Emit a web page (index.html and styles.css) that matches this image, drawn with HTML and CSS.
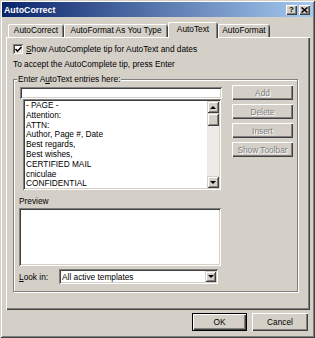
FILE: index.html
```html
<!DOCTYPE html>
<html>
<head>
<meta charset="utf-8">
<title>AutoCorrect</title>
<link rel="stylesheet" href="styles.css">
</head>
<body>
<div class="window">
  <div class="titlebar">
    <span class="title">AutoCorrect</span>
    <div class="caption-btns">
      <span class="capbtn help">?</span>
      <span class="capbtn close"><svg width="7" height="6" viewBox="0 0 7 6"><path d="M0.5 0.5 L6.5 5.5 M6.5 0.5 L0.5 5.5" stroke="#000" stroke-width="1.5"/></svg></span>
    </div>
  </div>
  <div class="tabs">
    <div class="tab tab-w1">AutoCorrect</div>
    <div class="tab tab-w2">AutoFormat As You Type</div>
    <div class="tab tab-sel">AutoText</div>
    <div class="tab tab-w4">AutoFormat</div>
  </div>
  <div class="panel">
    <div class="chkrow">
      <span class="chk"><svg width="7" height="7" viewBox="0 0 7 7"><path d="M0.5 3 L2.5 5.2 L6.5 1" fill="none" stroke="#000" stroke-width="1.6"/></svg></span>
      <span><u>S</u>how AutoComplete tip for AutoText and dates</span>
    </div>
    <div class="hint">To accept the AutoComplete tip, press Enter</div>
    <div class="group">
      <span class="glabel">Enter A<u>u</u>toText entries here:</span>
      <div class="gbody">
        <div class="leftcol">
          <div class="input"></div>
          <div class="list">
            <div class="items">
              <div>- PAGE -</div>
              <div>Attention:</div>
              <div>ATTN:</div>
              <div>Author, Page #, Date</div>
              <div>Best regards,</div>
              <div>Best wishes,</div>
              <div>CERTIFIED MAIL</div>
              <div>cniculae</div>
              <div>CONFIDENTIAL</div>
            </div>
            <div class="vscroll">
              <div class="sbtn"><span class="arrow-up"></span></div>
              <div class="thumb"></div>
              <div class="track"></div>
              <div class="sbtn"><span class="arrow-down"></span></div>
            </div>
          </div>
          <div class="plabel">Preview</div>
          <div class="preview"></div>
          <div class="lookrow">
            <span class="looklabel"><u>L</u>ook in:</span>
            <div class="combo">
              <span class="combotext">All active templates</span>
              <span class="combobtn"><span class="arrow-down"></span></span>
            </div>
          </div>
        </div>
        <div class="rightcol">
          <div class="btn disabled">Add</div>
          <div class="btn disabled">Delete</div>
          <div class="btn disabled">Insert</div>
          <div class="btn disabled">Show Toolbar</div>
        </div>
      </div>
    </div>
  </div>
  <div class="footer">
    <div class="btn default okbtn">OK</div>
    <div class="btn cancelbtn">Cancel</div>
  </div>
</div>
</body>
</html>
```

FILE: styles.css
```css
html, body {
  margin: 0;
  padding: 0;
  background: #d4d0c8;
}
body {
  font-family: "Liberation Sans", Arial, sans-serif;
  font-size: 8.3px;
  color: #000;
}
.window {
  width: 315px;
  height: 338px;
  box-sizing: border-box;
  background: #d4d0c8;
  padding: 2px 2px 0 2px;
  display: flex;
  flex-direction: column;
  box-shadow: inset 1px 1px #d4d0c8, inset -1px -1px #404040, inset 2px 2px #fff, inset -2px -2px #808080;
}
.titlebar {
  height: 15px;
  flex: none;
  display: flex;
  align-items: center;
  justify-content: space-between;
  padding: 0 3px 0 2px;
  background: linear-gradient(to right, #0a246a, #a6caf0);
}
.title {
  color: #fff;
  font-weight: bold;
  font-size: 8.8px;
}
.caption-btns {
  display: flex;
  gap: 2px;
}
.capbtn {
  width: 11px;
  height: 10px;
  box-sizing: border-box;
  background: #d4d0c8;
  display: flex;
  align-items: center;
  justify-content: center;
  font-weight: bold;
  font-size: 8px;
  box-shadow: inset 1px 1px #fff, inset -1px -1px #404040, inset -2px -2px #808080;
}
.tabs {
  flex: none;
  height: 15px;
  margin-top: 5px;
  padding-left: 6px;
  display: flex;
  align-items: flex-end;
}
.tab {
  height: 13px;
  box-sizing: border-box;
  text-align: center;
  line-height: 13px;
  white-space: nowrap;
  border-radius: 2px 2px 0 0;
  box-shadow: inset 1px 0 #fff, inset 0 1px #fff, inset -1px 0 #404040, inset -2px 0 #808080;
}
.tab-w1 { width: 56px; }
.tab-w2 { width: 104px; }
.tab-w4 { width: 52px; }
.tab-sel {
  width: 50px;
  height: 16px;
  line-height: 14px;
  margin-bottom: -1px;
  position: relative;
  z-index: 1;
  background: #d4d0c8;
}
.panel {
  flex: none;
  height: 273px;
  margin: 0 3px 0 4px;
  box-sizing: border-box;
  padding: 7px 0 0 7px;
  box-shadow: inset 1px 1px #fff, inset -1px -1px #404040, inset -2px -2px #808080;
  display: flex;
  flex-direction: column;
}
.chkrow {
  height: 10px;
  display: flex;
  align-items: center;
  gap: 3px;
}
.chk {
  width: 10px;
  height: 10px;
  box-sizing: border-box;
  background: #fff;
  display: flex;
  align-items: center;
  justify-content: center;
  box-shadow: inset 1px 1px #808080, inset -1px -1px #fff, inset 2px 2px #404040, inset -2px -2px #d4d0c8;
}
.hint {
  margin-top: 5px;
  height: 11px;
  line-height: 11px;
}
.group {
  margin-top: 9px;
  width: 285px;
  box-sizing: border-box;
  border: 1px solid #808080;
  box-shadow: inset 1px 1px #fff, 1px 1px #fff;
  padding: 0 4px 7px 6px;
  display: flex;
  flex-direction: column;
}
.glabel {
  align-self: flex-start;
  margin-top: -6px;
  margin-left: -3px;
  padding: 0 1px;
  height: 11px;
  line-height: 11px;
  background: #d4d0c8;
}
.gbody {
  margin-top: 2px;
  display: flex;
}
.leftcol {
  width: 202px;
  display: flex;
  flex-direction: column;
}
.sunken {
  box-shadow: inset 1px 1px #808080, inset -1px -1px #fff, inset 2px 2px #404040, inset -2px -2px #d4d0c8;
}
.input, .list, .preview, .combo {
  background: #fff;
  box-sizing: border-box;
  box-shadow: inset 1px 1px #808080, inset -1px -1px #fff, inset 2px 2px #404040, inset -2px -2px #d4d0c8;
}
.input {
  height: 12px;
}
.list {
  margin-left: 3px;
  width: 198px;
  height: 91px;
  padding: 2px;
  display: flex;
}
.items {
  flex: 1;
  padding-left: 1px;
  line-height: 9.8px;
  white-space: nowrap;
  overflow: hidden;
}
.vscroll {
  width: 12px;
  display: flex;
  flex-direction: column;
}
.sbtn {
  height: 12px;
  flex: none;
  box-sizing: border-box;
  background: #d4d0c8;
  display: flex;
  align-items: center;
  justify-content: center;
  box-shadow: inset 1px 1px #d4d0c8, inset -1px -1px #404040, inset 2px 2px #fff, inset -2px -2px #808080;
}
.thumb {
  height: 13px;
  flex: none;
  background: #d4d0c8;
  box-shadow: inset 1px 1px #d4d0c8, inset -1px -1px #404040, inset 2px 2px #fff, inset -2px -2px #808080;
}
.track {
  flex: 1;
  background: #ecebe7;
}
.arrow-up {
  width: 0;
  height: 0;
  border-left: 3px solid transparent;
  border-right: 3px solid transparent;
  border-bottom: 3px solid #000;
}
.arrow-down {
  width: 0;
  height: 0;
  border-left: 3px solid transparent;
  border-right: 3px solid transparent;
  border-top: 3px solid #000;
}
.plabel {
  margin-top: 6px;
  margin-left: -1px;
  height: 11px;
  line-height: 11px;
}
.preview {
  margin-top: 1px;
  margin-left: -1px;
  width: 202px;
  height: 58px;
}
.lookrow {
  margin-top: 3px;
  margin-left: -1px;
  height: 15px;
  display: flex;
  align-items: center;
}
.looklabel {
  width: 40px;
}
.combo {
  width: 159px;
  height: 15px;
  padding: 2px;
  display: flex;
  align-items: center;
  justify-content: space-between;
}
.combotext {
  padding-left: 1px;
}
.combobtn {
  width: 11px;
  height: 11px;
  box-sizing: border-box;
  background: #d4d0c8;
  display: flex;
  align-items: center;
  justify-content: center;
  box-shadow: inset 1px 1px #d4d0c8, inset -1px -1px #404040, inset 2px 2px #fff, inset -2px -2px #808080;
}
.rightcol {
  margin-left: 10px;
  margin-top: -2px;
  width: 61px;
  display: flex;
  flex-direction: column;
  gap: 4px;
}
.btn {
  height: 15px;
  box-sizing: border-box;
  background: #d4d0c8;
  display: flex;
  align-items: center;
  justify-content: center;
  white-space: nowrap;
  box-shadow: inset 1px 1px #fff, inset -1px -1px #404040, inset -2px -2px #808080;
}
.btn.disabled {
  color: #808080;
  text-shadow: 1px 1px #fff;
}
.footer {
  flex: none;
  margin-top: 3px;
  padding-right: 5px;
  display: flex;
  justify-content: flex-end;
  gap: 5px;
}
.footer .btn {
  height: 18px;
}
.okbtn {
  width: 55px;
}
.cancelbtn {
  width: 56px;
}
.btn.default {
  box-shadow: inset 0 0 0 1px #000, inset 2px 2px #fff, inset -2px -2px #404040, inset -3px -3px #808080;
}
```
